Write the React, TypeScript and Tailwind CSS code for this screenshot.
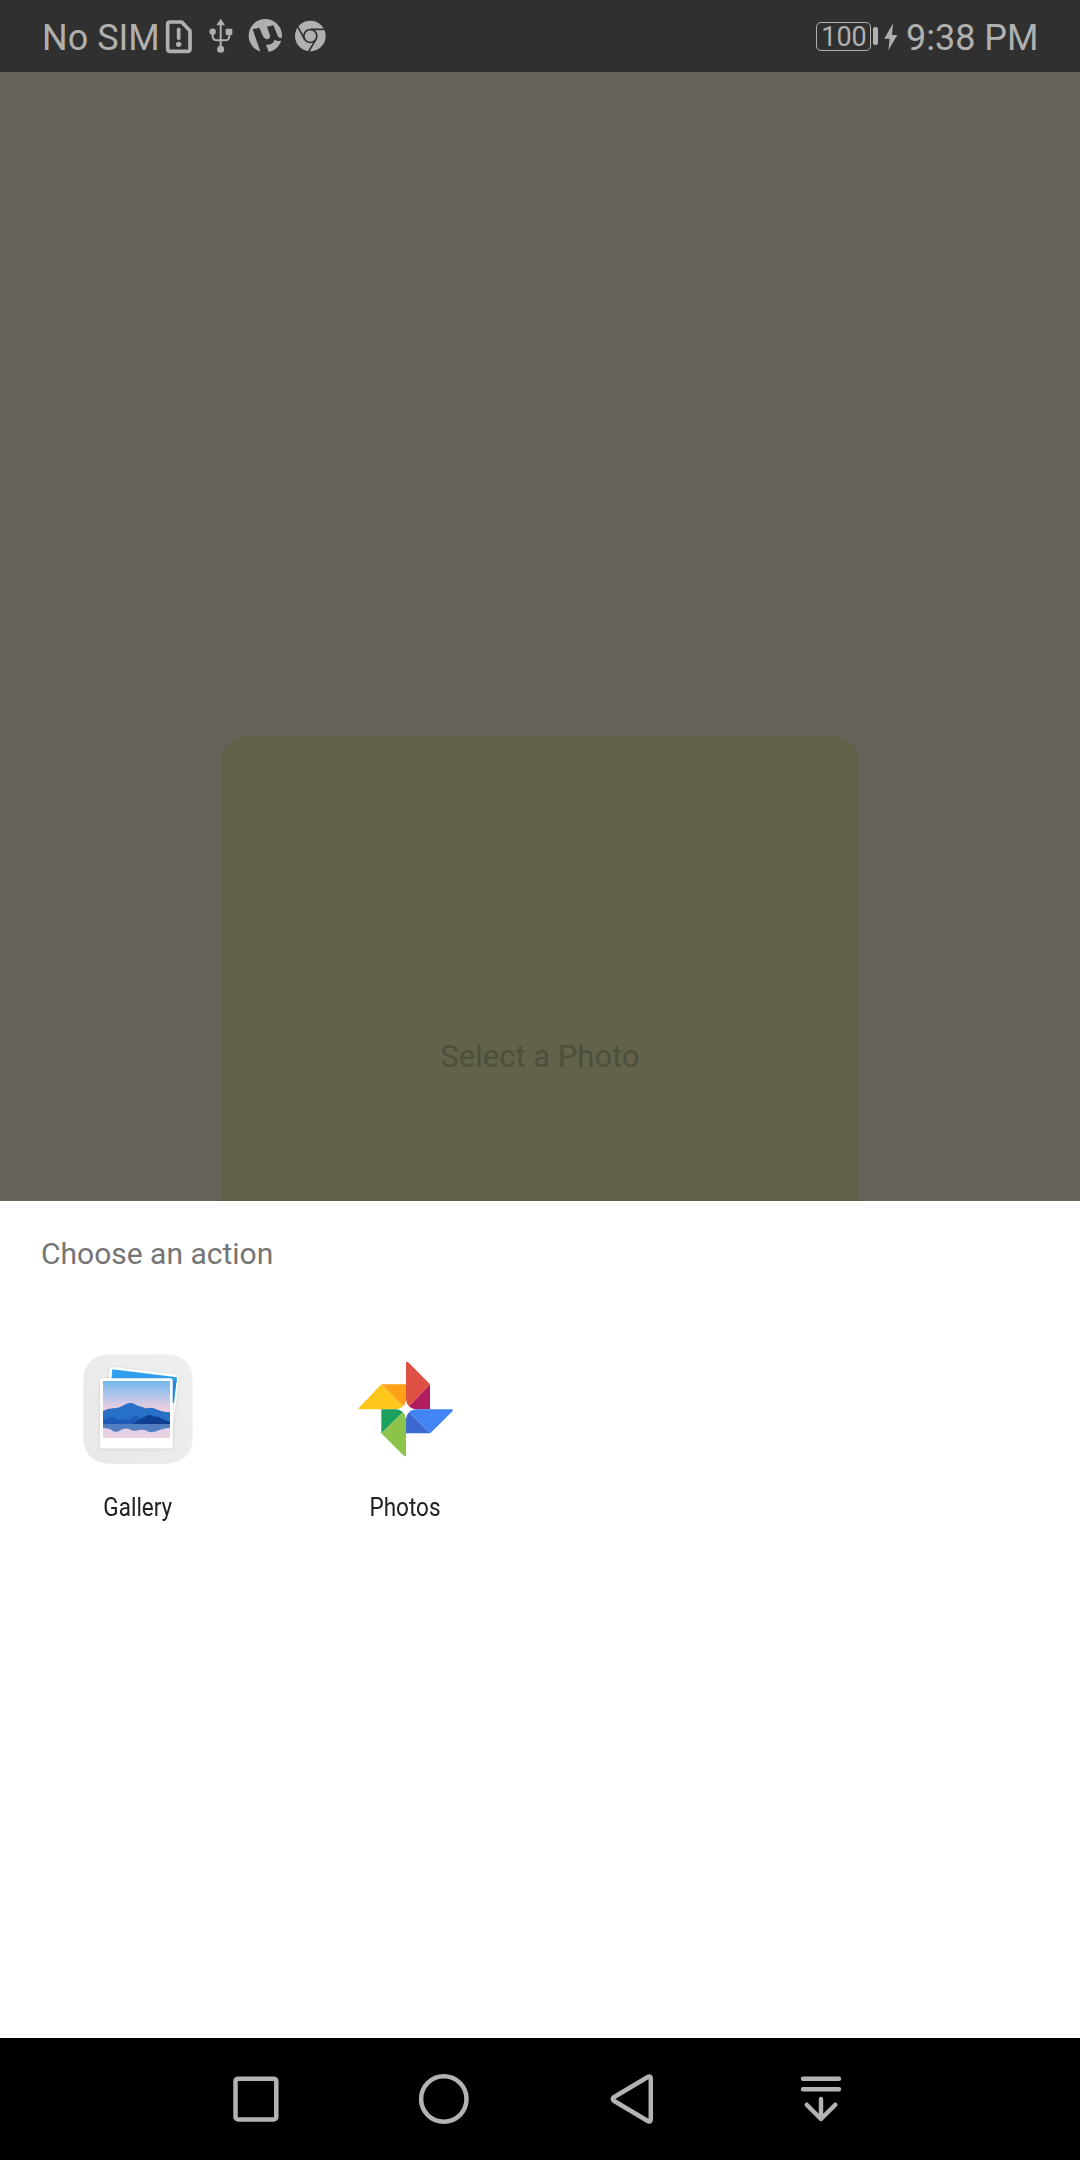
import React from "react";

function SimAlertIcon() {
  return (
    <svg className="ml-[6px] h-[35px] w-[28px]" viewBox="405 54 84 105" fill="none">
      <path d="M420 63H455L480 89V144Q480 151 473 151H420Q413 151 413 144V70Q413 63 420 63Z" stroke="#b0b0b0" strokeWidth="11" strokeLinejoin="round" />
      <path d="M446 85V112" stroke="#b0b0b0" strokeWidth="11" strokeLinecap="round" />
      <circle cx="446" cy="130" r="8" fill="#b0b0b0" />
    </svg>
  );
}

function UsbIcon() {
  return (
    <svg className="ml-[16px] h-[36px] w-[24px]" viewBox="536 56 72 108" fill="#b0b0b0">
      <path d="M571 58L584 78H558Z" />
      <rect x="586" y="88" width="20" height="19" rx="3" />
      <circle cx="547" cy="97" r="9.5" />
      <circle cx="571" cy="150" r="10.5" />
      <path d="M571 72V146M547 98V109Q547 123 561 123H584Q597 123 597 109V98" fill="none" stroke="#b0b0b0" strokeWidth="6" />
    </svg>
  );
}

function TorrentIcon() {
  return (
    <svg className="ml-[15px] h-[36px] w-[36px]" viewBox="654 56 108 108">
      <circle cx="706" cy="109" r="50" fill="#b0b0b0" />
      <path d="M668 90L688 85L699 111Q704 122 714 119Q723 116 719 105L711 82L730 78L743 109Q747 118 759 115V123Q742 128 734 121Q729 137 708 136L719 165H694Z" fill="#303030" />
    </svg>
  );
}

function ChromeIcon() {
  return (
    <svg className="ml-[10px] h-[36px] w-[33px]" viewBox="792 56 99 108" fill="none">
      <circle cx="841" cy="110" r="46" fill="#b0b0b0" />
      <circle cx="841" cy="110" r="19.5" stroke="#303030" strokeWidth="5" />
      <path d="M841 90H884M824 120L803 82M858 120L835 158" stroke="#303030" strokeWidth="5" />
    </svg>
  );
}

function StatusBar() {
  return (
    <header className="flex h-[72px] items-center justify-between bg-[#303030] pl-[42px] pr-[42px] text-[36px] text-[#b0b0b0]">
      <div className="flex items-center">
        <span className="w-[117px] whitespace-nowrap pt-[4px] leading-[68px]">No SIM</span>
        <SimAlertIcon />
        <UsbIcon />
        <TorrentIcon />
        <ChromeIcon />
      </div>
      <div className="flex items-center">
        <span className="mt-px flex h-[29px] w-[55px] items-center justify-center rounded-[5px] border-[1.5px] border-[#b0b0b0] pl-px pt-[2px] text-[27px] leading-none">
          100
        </span>
        <span className="ml-[2px] h-[18px] w-[5px] rounded-[2px] bg-[#b0b0b0]" />
        <svg className="ml-[6px] mt-px h-[28px] w-[14px]" viewBox="251 68 42 84" fill="#b0b0b0">
          <path d="M278 69L252 115H268L264 150L291 104H275Z" />
        </svg>
        <span className="ml-[8px] w-[132px] whitespace-nowrap pt-[4px] leading-[68px]">9:38 PM</span>
      </div>
    </header>
  );
}

function GalleryIcon() {
  return (
    <svg className="size-[110px]" viewBox="39 42 330 330">
      <defs>
        <linearGradient id="sky" x1="0" y1="0" x2="0" y2="1">
          <stop offset="0" stopColor="#70b7eb" />
          <stop offset="0.28" stopColor="#b7c5ea" />
          <stop offset="0.52" stopColor="#f3cfdb" />
          <stop offset="1" stopColor="#f0d0df" />
        </linearGradient>
        <linearGradient id="lake" x1="0" y1="0" x2="0" y2="1">
          <stop offset="0" stopColor="#d8cfe9" />
          <stop offset="1" stopColor="#efd2e2" />
        </linearGradient>
        <linearGradient id="tile" x1="0" y1="1" x2="1" y2="0">
          <stop offset="0" stopColor="#e8e8e8" />
          <stop offset="1" stopColor="#efefef" />
        </linearGradient>
        <filter id="soft" x="-10%" y="-10%" width="120%" height="120%">
          <feDropShadow dx="0" dy="2" stdDeviation="4" floodOpacity="0.13" />
        </filter>
      </defs>
      <path d="M122 43H286C340 43 368 73 368 125V289C368 341 340 371 286 371H122C68 371 40 341 40 289V125C40 73 68 43 122 43Z" fill="url(#tile)" />
      <g filter="url(#soft)">
        <path d="M126 81L322 104Q328 105 327 111L303 305L100 280L120 86Q121 80 126 81Z" fill="#fff" />
      </g>
      <path d="M127 88L321 112L300 285L110 262Z" fill="#309fee" />
      <path d="M309 125L320 119L306 220Z" fill="#268bdf" />
      <path d="M306 190L312 190L303 305H300Z" fill="#fff" />
      <rect x="90" y="115" width="218" height="210" rx="7" fill="#fff" filter="url(#soft)" />
      <rect x="99" y="123" width="201" height="171" fill="url(#sky)" />
      <path d="M99 213Q115 204 133 205Q148 204 158 197Q170 189 182 188Q192 189 203 197Q217 201 228 205Q244 201 257 207Q275 216 300 217V253H99Z" fill="#286fc7" />
      <path d="M99 242Q114 232 128 231L144 240L158 236L173 241L198 226L215 236L235 224L300 250V253H99Z" fill="#1d5ab6" />
      <path d="M189 253Q201 242 211 238L237 224Q246 225 254 230L265 230Q280 240 300 245V253Z" fill="#103f92" />
      <rect x="99" y="252" width="201" height="42" fill="url(#lake)" />
      <path d="M99 252H300V263Q282 264 270 269Q257 276 242 277Q233 276 228 271Q213 267 203 271Q193 275 182 269Q168 263 157 268Q148 274 137 276Q128 275 121 267L99 263Z" fill="#527fc1" />
    </svg>
  );
}

function PhotosIcon() {
  return (
    <svg className="size-[110px]" viewBox="60 41 330 330">
      <path d="M154 132H228V207Z" fill="#ffa017" />
      <path d="M154 132L228 207H87Q83 206 87 202Z" fill="#ffc61b" />
      <path d="M300 132V207H228Z" fill="#b01c5d" />
      <path d="M228 207V67Q229 62 234 65L300 132Z" fill="#de5043" />
      <path d="M228 207H366Q371 208 368 212L301 279Z" fill="#4384f4" />
      <path d="M228 207L301 279H228Z" fill="#3b69d2" />
      <path d="M154 207H228L154 279Z" fill="#1aa15f" />
      <path d="M154 279L228 207V345Q226 350 222 347Z" fill="#8cc44b" />
      <path d="M228 179Q232 203 256 207Q232 211 228 235Q224 211 200 207Q224 203 228 179Z" fill="#fff" />
    </svg>
  );
}

function Target({ label, children }: { label: string; children: React.ReactNode }) {
  return (
    <div className="flex flex-col items-center">
      {children}
      <span className="mt-[27px] inline-block scale-x-[0.865] whitespace-nowrap text-[26px] leading-[32px] text-[#212121]">{label}</span>
    </div>
  );
}

function NavBar() {
  return (
    <nav className="flex h-[122px] items-center bg-black pl-[230px]">
      <svg className="size-[52px]" viewBox="0 0 52 52" fill="none" stroke="#b3b3b3" strokeWidth="4.5">
        <rect x="5.5" y="5.7" width="40.8" height="40.8" rx="2.5" />
      </svg>
      <svg className="ml-[136px] size-[52px]" viewBox="0 0 52 52" fill="none" stroke="#b3b3b3" strokeWidth="4.5">
        <circle cx="25.8" cy="26" r="22.7" />
      </svg>
      <svg className="ml-[139px] size-[52px]" viewBox="0 0 52 52" fill="none" stroke="#b3b3b3" strokeWidth="4.5" strokeLinejoin="round">
        <path d="M4.8 24.2L39.2 3.8Q41.8 2.6 41.8 6V46Q41.8 49.4 39.2 48.2L4.8 27.8Q2.8 26 4.8 24.2Z" />
      </svg>
      <svg className="ml-[137px] size-[52px]" viewBox="0 0 52 52" fill="none" stroke="#b3b3b3" strokeWidth="4.4" strokeLinecap="round" strokeLinejoin="round">
        <path d="M5 5.7H41M5 16.3H41M23 26V46M8.7 31.7L23 46L37.3 31.7" />
      </svg>
    </nav>
  );
}

export default function App() {
  return (
    <div className="flex h-[2160px] w-[1080px] flex-col overflow-hidden bg-white font-['Roboto',sans-serif]">
      <StatusBar />
      <main className="flex h-[1129px] flex-col items-center overflow-hidden bg-[#66635b] pt-[664px]">
        <div className="h-[638px] w-[638px] shrink-0 rounded-[26px] border border-[#5f5f49] bg-[#62624b] pt-[300px] text-center text-[31px] leading-[40px] text-[#4d4e3c]">
          Select a Photo
        </div>
      </main>
      <section className="h-[837px] bg-white pt-[33px]">
        <h1 className="pl-[41px] text-[30px] leading-[40px] text-[#757575]">Choose an action</h1>
        <div className="mt-[80px] grid grid-cols-[268px_266px] px-[4px]">
          <Target label="Gallery">
            <GalleryIcon />
          </Target>
          <Target label="Photos">
            <PhotosIcon />
          </Target>
        </div>
      </section>
      <NavBar />
    </div>
  );
}
